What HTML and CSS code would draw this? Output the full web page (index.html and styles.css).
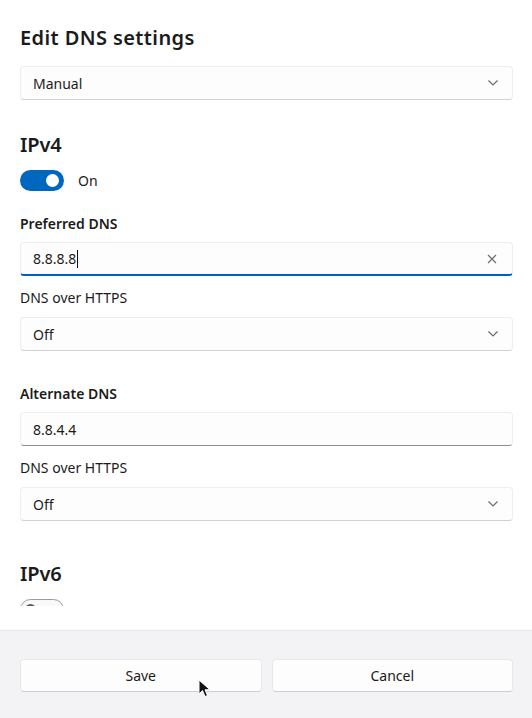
FILE: index.html
```html
<!DOCTYPE html>
<html>
<head>
<meta charset="utf-8">
<link rel="stylesheet" href="styles.css">
</head>
<body>
<div class="page">
  <div class="scroll">
    <h1 class="title">Edit DNS settings</h1>
    <div class="select first">
      <span>Manual</span>
      <svg class="chev" width="10" height="6" viewBox="0 0 10 6"><polyline points="0.5,0.5 5,5 9.5,0.5" fill="none" stroke="#6b6b6b" stroke-width="1.2"/></svg>
    </div>

    <h2 class="section">IPv4</h2>
    <div class="toggle-row">
      <div class="toggle on"><div class="knob"></div></div>
      <span class="toggle-label">On</span>
    </div>

    <div class="label strong">Preferred DNS</div>
    <div class="input focused">
      <span class="val">8.8.8.8<span class="caret"></span></span>
      <svg class="clear" width="10" height="10" viewBox="0 0 10 10"><path d="M1 1 L9 9 M9 1 L1 9" stroke="#6b6b6b" stroke-width="1.1" fill="none"/></svg>
    </div>
    <div class="label sub">DNS over HTTPS</div>
    <div class="select">
      <span>Off</span>
      <svg class="chev" width="10" height="6" viewBox="0 0 10 6"><polyline points="0.5,0.5 5,5 9.5,0.5" fill="none" stroke="#6b6b6b" stroke-width="1.2"/></svg>
    </div>

    <div class="label strong gap-big">Alternate DNS</div>
    <div class="input">
      <span class="val">8.8.4.4</span>
    </div>
    <div class="label sub">DNS over HTTPS</div>
    <div class="select">
      <span>Off</span>
      <svg class="chev" width="10" height="6" viewBox="0 0 10 6"><polyline points="0.5,0.5 5,5 9.5,0.5" fill="none" stroke="#6b6b6b" stroke-width="1.2"/></svg>
    </div>

    <h2 class="section v6">IPv6</h2>
    <div class="toggle-row">
      <div class="toggle off"><div class="knob"></div></div>
    </div>
  </div>
  <div class="spacer"></div>
  <div class="footer">
    <button class="btn">Save</button>
    <button class="btn">Cancel</button>
  </div>
  <svg class="cursor" width="14" height="20" viewBox="0 0 14 20"><path d="M1 1 L1 15 L4.5 11.5 L7 17.5 L9.5 16.5 L7 10.8 L12 10.8 Z" fill="#111" stroke="#fff" stroke-width="1"/></svg>
</div>
</body>
</html>
```
FILE: styles.css
```css
* { box-sizing: border-box; }
html, body { margin: 0; padding: 0; }
body {
  width: 532px;
  height: 718px;
  background: #ffffff;
  font-family: "Noto Sans", "Open Sans", sans-serif;
  color: #1b1b1b;
  overflow: hidden;
}
.page {
  position: relative;
  width: 532px;
  height: 718px;
  display: flex;
  flex-direction: column;
}
.scroll {
  height: 606px;
  overflow: hidden;
  padding: 0 19px 0 20px;
  display: flex;
  flex-direction: column;
}
.title {
  margin: 24px 0 0 0;
  font-size: 20px;
  font-weight: 600;
  line-height: 28px;
  letter-spacing: 0.4px;
}
.select, .input {
  height: 34px;
  background: #fdfdfd;
  border: 1px solid #efedef;
  border-bottom-color: #d3d1d4;
  border-radius: 4px;
  display: flex;
  align-items: center;
  justify-content: space-between;
  padding: 0 14px 0 12px;
  font-size: 14px;
  flex-shrink: 0;
}
.input { border-bottom-color: #8e8d8f; }
.select.first { margin-top: 14px; }
.chev { display: block; }
.section {
  margin: 31px 0 0 0;
  font-size: 20px;
  font-weight: 600;
  line-height: 28px;
  letter-spacing: -0.1px;
}
.section.v6 { margin-top: 39px; }
.toggle-row {
  margin-top: 11px;
  display: flex;
  align-items: center;
  flex-shrink: 0;
}
.toggle {
  width: 44px;
  height: 21px;
  border-radius: 11px;
  position: relative;
  flex-shrink: 0;
}
.toggle.on { background: #0067c0; }
.toggle.on .knob {
  position: absolute;
  width: 13px;
  height: 13px;
  border-radius: 50%;
  background: #fff;
  top: 4px;
  right: 5px;
}
.toggle.off { border: 1px solid #9a9a9a; background: #f9f9f9; }
.toggle.off .knob {
  position: absolute;
  width: 11px;
  height: 11px;
  border-radius: 50%;
  background: #5a5a5a;
  top: 4px;
  left: 4px;
}
.toggle-label {
  margin-left: 14px;
  font-size: 14px;
  line-height: 20px;
}
.label {
  font-size: 14px;
  line-height: 20px;
  flex-shrink: 0;
}
.label.strong {
  font-weight: 600;
  margin-top: 23px;
  margin-bottom: 8px;
}
.label.strong.gap-big { margin-top: 33px; }
.label.sub {
  margin-top: 12px;
  margin-bottom: 9px;
}
.input.focused {
  border-bottom: 2px solid #005fb8;
}
.val { display: flex; align-items: center; }
.caret {
  display: inline-block;
  width: 1px;
  height: 18px;
  background: #111;
  margin-left: 1px;
}
.clear { display: block; margin-right: 1px; }
.spacer { height: 24px; flex-shrink: 0; }
.footer {
  flex: 1;
  background: #f3f2f4;
  border-top: 1px solid #e6e5e7;
  padding: 28px 19px 0 20px;
  display: flex;
  gap: 10px;
  align-items: flex-start;
}
.btn {
  flex: 1;
  height: 33px;
  background: #fdfdfd;
  border: 1px solid #e8e7e9;
  border-bottom-color: #cfcdd0;
  border-radius: 4px;
  font-family: "Noto Sans", "Open Sans", sans-serif;
  font-size: 14px;
  color: #1b1b1b;
  padding: 0;
}
.cursor {
  position: absolute;
  left: 198px;
  top: 679px;
}
```
